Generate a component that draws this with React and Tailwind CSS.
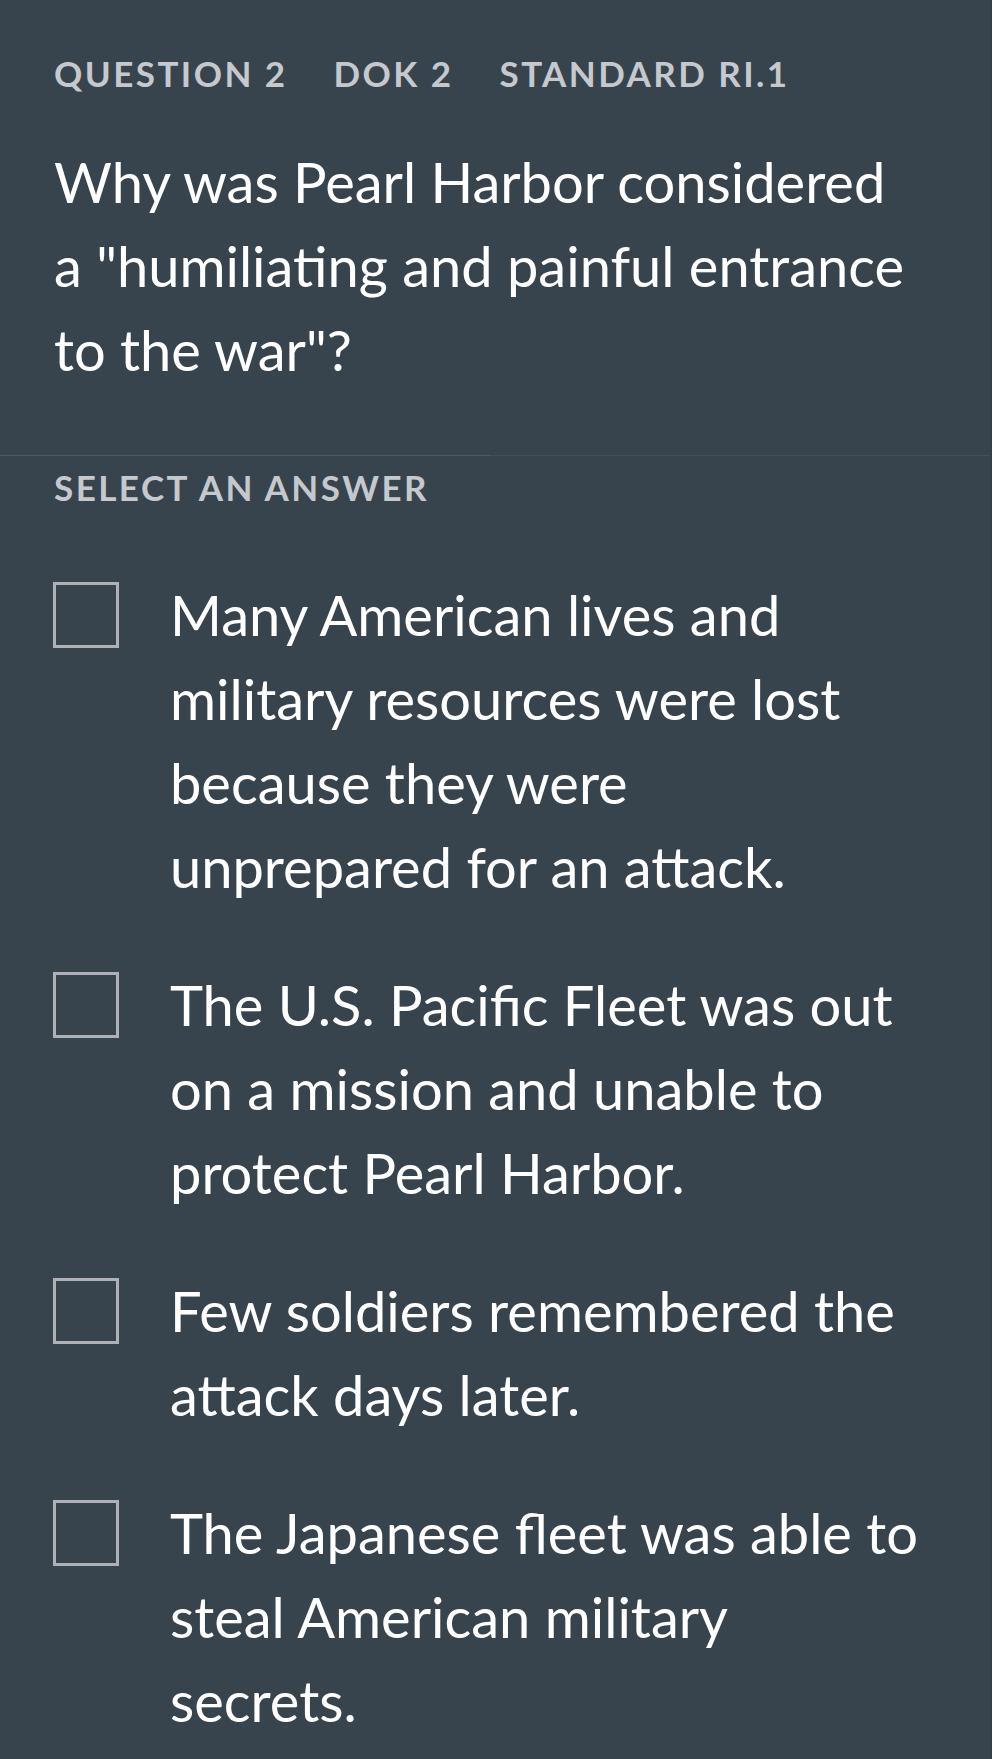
const options = [
  ['Many American lives and', 'military resources were lost', 'because they were', 'unprepared for an attack.'],
  ['The U.S. Pacific Fleet was out', 'on a mission and unable to', 'protect Pearl Harbor.'],
  ['Few soldiers remembered the', 'attack days later.'],
  ['The Japanese fleet was able to', 'steal American military', 'secrets.'],
];

function Option({ lines }) {
  return (
    <div className="flex items-start">
      <div className="mt-[9px] ml-[-1px] h-[66px] w-[66px] shrink-0 border-[3px] border-[#aeb2b6]" />
      <p className="ml-[51px] w-[774px] text-[56px] leading-[84px] text-white">
        {lines.map((l, i) => (
          <span key={i} className="block whitespace-nowrap">{l}</span>
        ))}
      </p>
    </div>
  );
}

export default function App() {
  return (
    <div className="flex min-h-[1759px] w-[998px] bg-white" style={{ fontFamily: 'Lato, "Open Sans", sans-serif' }}>
      <div className="w-[992px] shrink-0 border-r-2 border-[#333e46] bg-[#38444d]">
        <div className="px-[54px] pt-[53px] pb-[63px]">
          <div className="flex gap-[46px] text-[35px] font-bold leading-[40px] tracking-[0.07em] text-[#c5c9cd]">
            <span>QUESTION 2</span>
            <span>DOK 2</span>
            <span>STANDARD RI.1</span>
          </div>
          <h1 className="mt-[47px] w-[870px] text-[56px] leading-[84px] text-white">
            Why was Pearl Harbor considered a "humiliating and painful entrance to the war"?
          </h1>
        </div>
        <div className="flex h-px">
          <div className="w-[490px] bg-[#4e5a62]" />
          <div className="flex-1 bg-[#434f57]" />
        </div>
        <div className="px-[54px] pt-[11px]">
          <h2 className="text-[35px] font-bold leading-[40px] tracking-[0.07em] text-[#c5c9cd]">SELECT AN ANSWER</h2>
          <div className="mt-[66px] flex flex-col gap-[54px] pb-[12px]">
            {options.map((o, i) => (
              <Option key={i} lines={o} />
            ))}
          </div>
        </div>
      </div>
    </div>
  );
}
